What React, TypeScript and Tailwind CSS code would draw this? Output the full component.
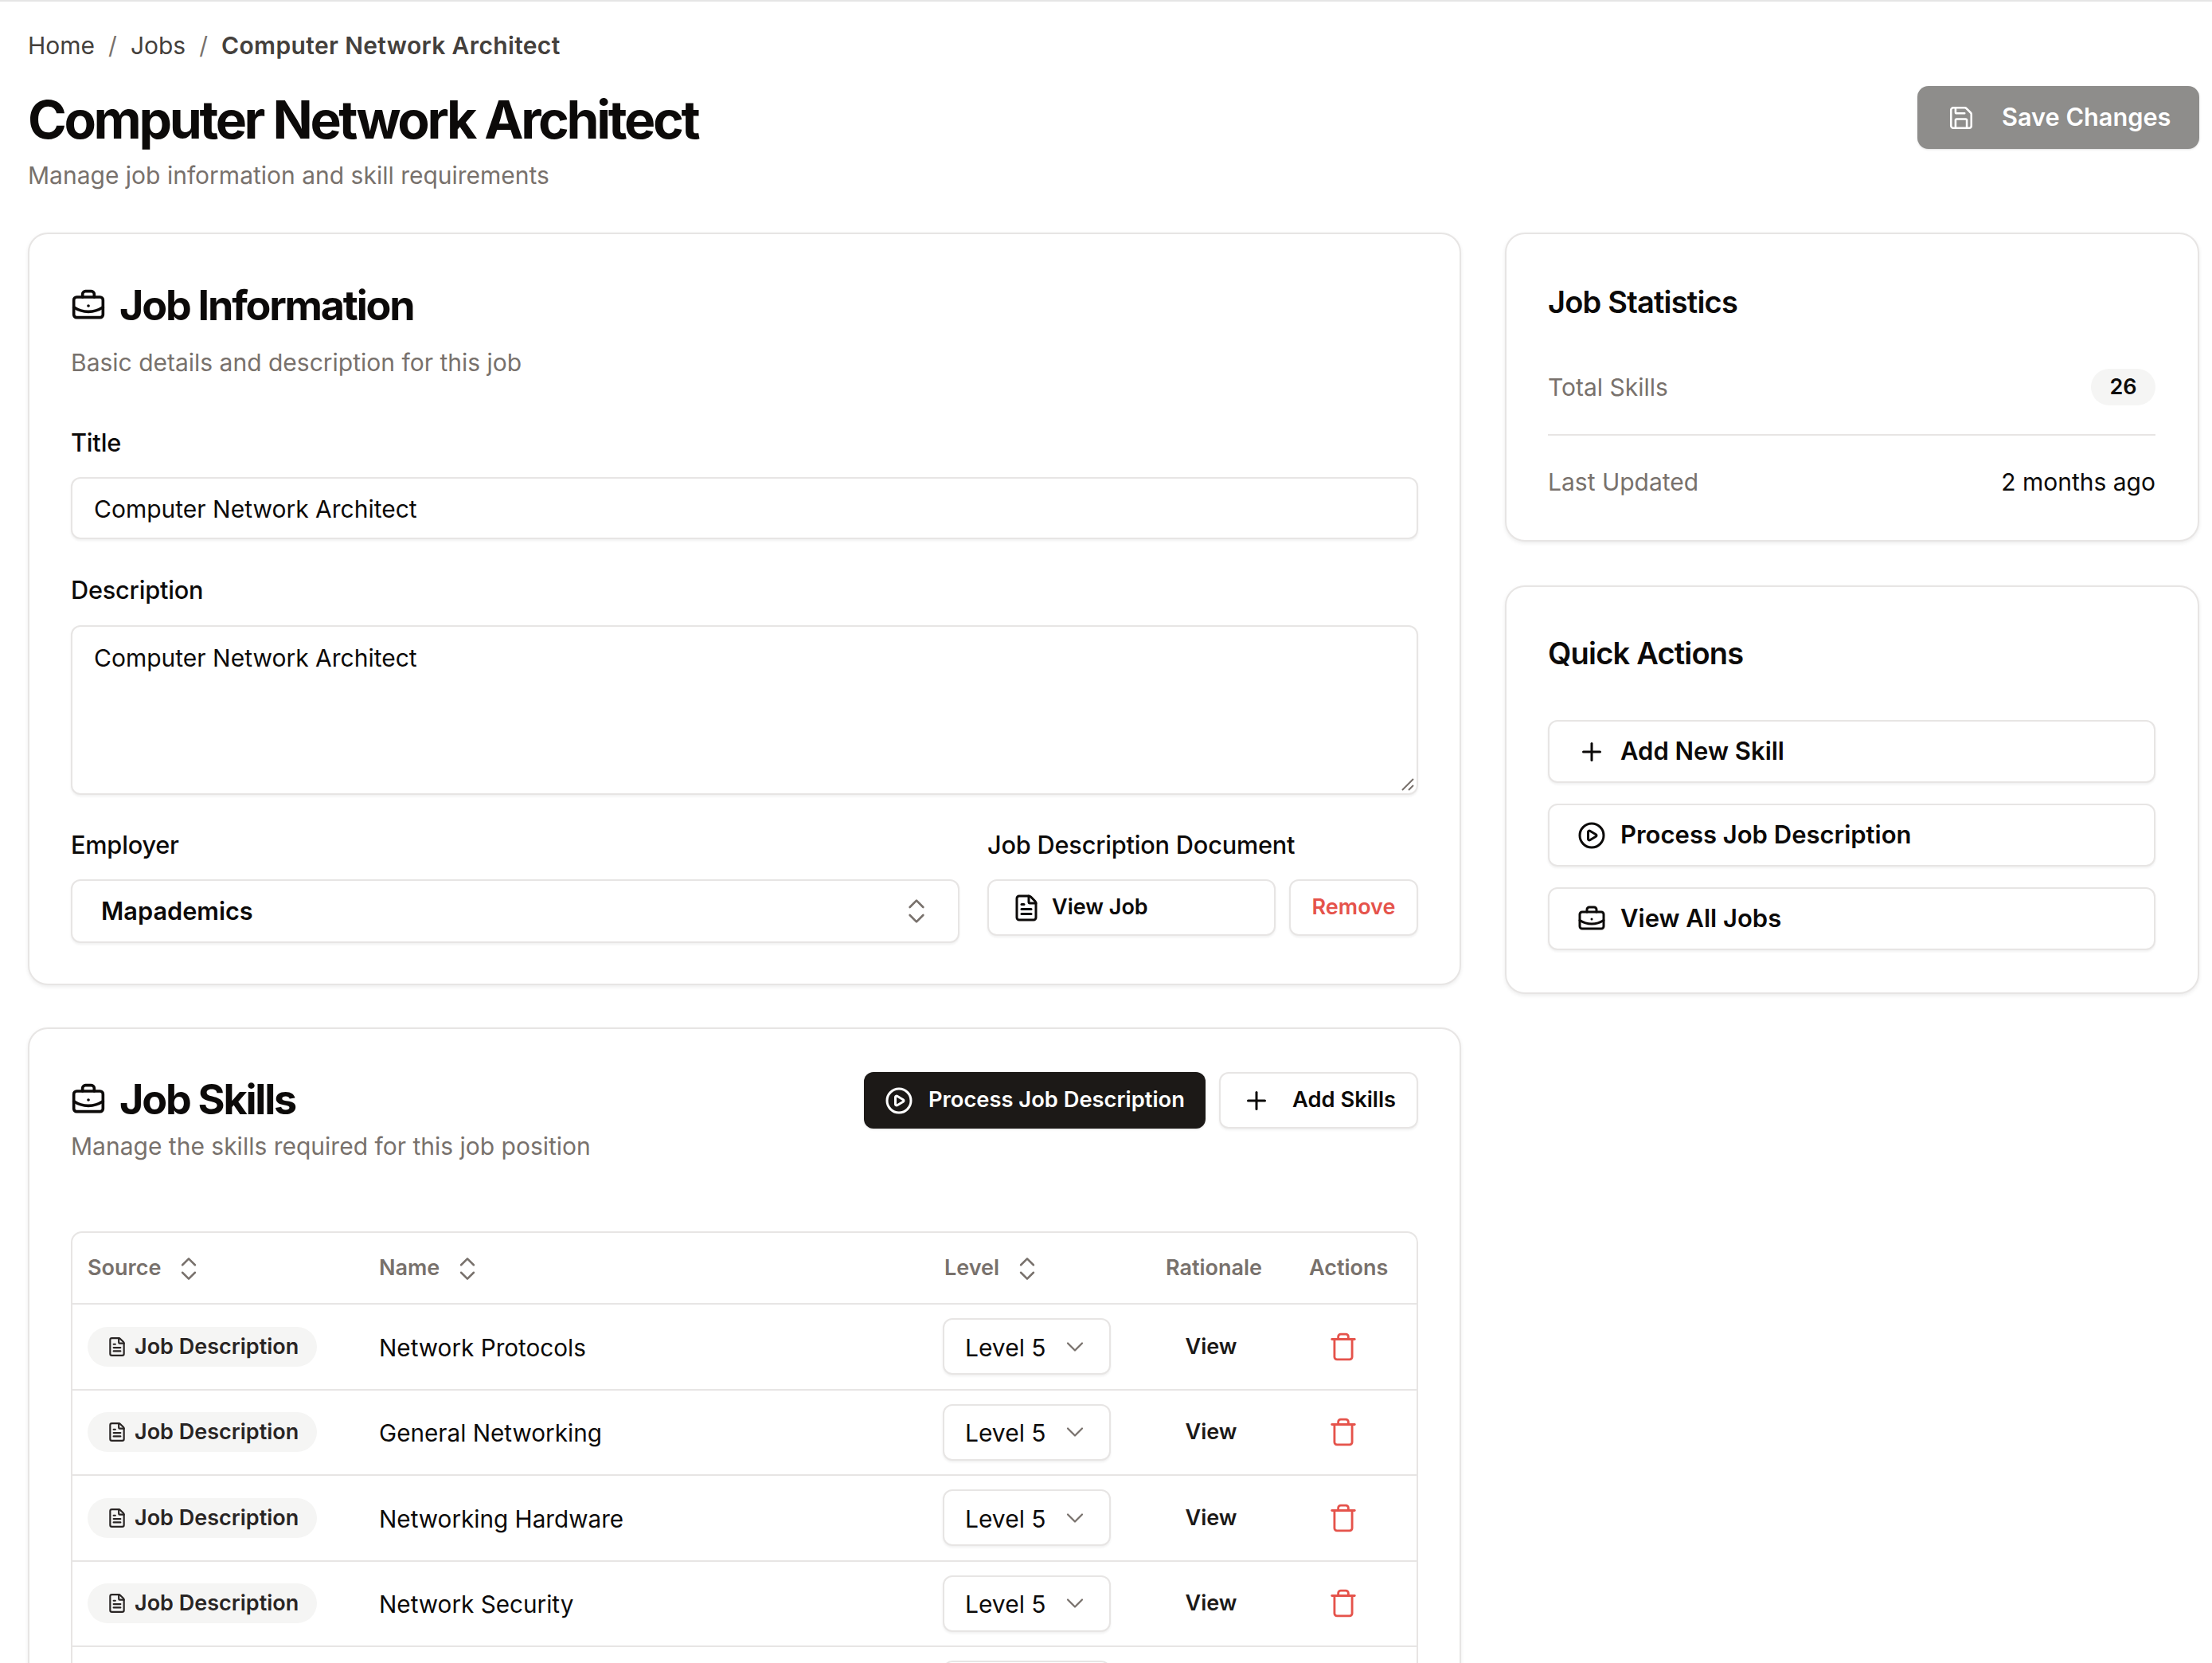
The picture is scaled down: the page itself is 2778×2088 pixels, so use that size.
import { BriefcaseBusiness, ChevronDown, ChevronsUpDown, CirclePlay, FileText, Plus, Save, Trash } from "lucide-react";

const card = "rounded-[25px] border-2 border-[#e7e5e4] bg-white shadow-[0_2px_5px_rgba(0,0,0,0.08)]";
const outline = "rounded-[12px] border-2 border-[#e7e5e4] bg-white shadow-[0_2px_3px_rgba(0,0,0,0.06)]";

function Label({ children }: { children: string }) {
  return <div className="h-[46px] text-[30.7px] leading-[46px] font-medium text-[#0c0a09] tracking-[-0.2px]">{children}</div>;
}

function QuickAction({ icon, label }: { icon: React.ReactNode; label: string }) {
  return (
    <div className={`${outline} flex h-[79px] items-center gap-[19px] pl-[36px] text-[31px] font-semibold text-[#0c0a09]`}>
      <span className="flex w-[34px] justify-center">{icon}</span>
      {label}
    </div>
  );
}

const row = "grid grid-cols-[366px_710px_278px_181px_1fr]";

function SortHead({ label }: { label: string }) {
  return (
    <div className="flex items-center gap-[16px] pl-[19px] text-[27px] font-semibold text-[#78716c]">
      {label}
      <ChevronsUpDown className="h-[38px] w-[38px] text-[#78716c]" strokeWidth={1.6} />
    </div>
  );
}

function LevelBox({ text }: { text: boolean }) {
  return (
    <div className={`${outline} flex h-[71px] w-[211px] items-center justify-between pl-[26px] pr-[25px] text-[30px] text-[#0c0a09]`}>
      {text && <span className="pt-[3px]">Level 5</span>}
      {text && <ChevronDown className="h-[36px] w-[36px] text-[#78716c]" strokeWidth={1.5} />}
    </div>
  );
}

function SkillRow({ name }: { name: string }) {
  return (
    <div className={`${row} h-[107.5px] items-center border-t-2 border-[#e7e5e4]`}>
      <div className="pl-[19px]">
        <div className="flex h-[50px] w-[288px] items-center gap-[9px] rounded-full bg-[#f5f5f4] pl-[24px] text-[27px] font-semibold text-[#292524]">
          <FileText className="h-[26px] w-[26px]" strokeWidth={2} />
          Job Description
        </div>
      </div>
      <div className="pl-[19px] pt-[3px] text-[29.7px] text-[#0c0a09]">{name}</div>
      <div className="pl-[17px]">
        <LevelBox text />
      </div>
      <div className="pl-[19px] pr-[48px] text-center text-[27px] font-semibold text-[#1c1917]">View</div>
      <div className="flex justify-center pr-[32px]">
        <Trash className="h-[38px] w-[38px] text-[#e5534b]" strokeWidth={1.8} />
      </div>
    </div>
  );
}

export default function App() {
  return (
    <div className="h-[2088px] overflow-hidden border-t-2 border-[#e5e5e5] bg-white pl-[35px] pr-[16px] font-['Inter',sans-serif]">
      <div className="mt-[32px] flex h-[46px] items-center gap-[17px] text-[30px] text-[#44403c]">
        <span>Home</span>
        <span className="text-[#78716c]">/</span>
        <span>Jobs</span>
        <span className="text-[#78716c]">/</span>
        <span className="font-semibold tracking-[0.35px]">Computer Network Architect</span>
      </div>
      <div className="flex items-start justify-between">
        <div>
          <h1 className="mt-[28px] text-[66px] leading-[84px] font-bold tracking-[-3.35px] text-[#0c0a09]">Computer Network Architect</h1>
          <p className="mt-[5px] text-[30px] leading-[46px] text-[#78716c]">Manage job information and skill requirements</p>
        </div>
        <div className="mt-[28px] flex h-[79px] w-[354px] items-center gap-[34px] rounded-[14px] bg-[#8e8d8b] pl-[38px] text-[30.7px] font-semibold text-white shadow-sm">
          <Save className="h-[34px] w-[34px]" strokeWidth={1.8} />
          Save Changes
        </div>
      </div>

      <div className="mt-[49px] flex items-start gap-[55px]">
        <div className="flex w-[1800px] flex-col gap-[53px]">
          <section className={`${card} h-[945px] px-[52px] pt-[58px]`}>
            <div className="flex items-center gap-[17px]">
              <BriefcaseBusiness className="h-[44px] w-[44px] text-[#0c0a09]" strokeWidth={2} />
              <h2 className="text-[52px] leading-[64px] font-bold tracking-[-2.2px] text-[#0c0a09]">Job Information</h2>
            </div>
            <p className="mt-[14px] text-[30px] leading-[50px] text-[#78716c]">Basic details and description for this job</p>
            <div className="mt-[53px]"><Label>Title</Label></div>
            <div className={`${outline} mt-[20px] flex h-[78px] items-center pl-[27px] pt-[2px] text-[30px] text-[#0c0a09]`}>Computer Network Architect</div>
            <div className="mt-[41px]"><Label>Description</Label></div>
            <div className={`${outline} relative mt-[21px] h-[213px] pl-[27px] pt-[17px] text-[30px] text-[#0c0a09]`}>
              Computer Network Architect
              <svg className="absolute bottom-[2px] right-[2px] h-[18px] w-[18px] text-[#78716c]" viewBox="0 0 18 18" fill="none" stroke="currentColor" strokeWidth="2">
                <path d="M16 2 2 16M16 10l-6 6" />
              </svg>
            </div>
            <div className="mt-[40px] flex gap-[35px]">
              <div className="w-[1116px]">
                <Label>Employer</Label>
                <div className={`${outline} mt-[20px] flex h-[80px] items-center justify-between pl-[36px] pr-[32px] text-[30.7px] font-semibold text-[#0c0a09]`}>
                  Mapademics
                  <ChevronsUpDown className="h-[40px] w-[40px] text-[#78716c]" strokeWidth={1.6} />
                </div>
              </div>
              <div className="flex-1">
                <Label>Job Description Document</Label>
                <div className="mt-[20px] flex gap-[17px]">
                  <div className={`${outline} flex h-[71px] w-[362px] items-center gap-[14px] pl-[29px] text-[27px] font-semibold text-[#0c0a09]`}>
                    <FileText className="h-[36px] w-[36px]" strokeWidth={2} />
                    View Job
                  </div>
                  <div className={`${outline} flex h-[71px] w-[162px] items-center justify-center text-[27px] font-semibold text-[#e5534b]`}>Remove</div>
                </div>
              </div>
            </div>
          </section>

          <section className={`${card} h-[900px] px-[52px] pt-[54px]`}>
            <div className="flex items-start justify-between">
              <div>
                <div className="flex items-center gap-[17px]">
                  <BriefcaseBusiness className="h-[44px] w-[44px] text-[#0c0a09]" strokeWidth={2} />
                  <h2 className="text-[52px] leading-[70px] font-bold tracking-[-2.2px] text-[#0c0a09]">Job Skills</h2>
                </div>
                <p className="text-[30px] leading-[46px] text-[#78716c]">Manage the skills required for this job position</p>
              </div>
              <div className="flex gap-[17px]">
                <div className="flex h-[71px] w-[429px] items-center gap-[19px] rounded-[12px] bg-[#1c1917] pl-[26px] text-[27.3px] font-semibold text-white shadow-sm">
                  <CirclePlay className="h-[36px] w-[36px]" strokeWidth={2} />
                  Process Job Description
                </div>
                <div className={`${outline} flex h-[71px] w-[250px] items-center gap-[27px] pl-[27px] text-[27.3px] font-semibold text-[#0c0a09]`}>
                  <Plus className="h-[36px] w-[36px]" strokeWidth={2} />
                  Add Skills
                </div>
              </div>
            </div>
            <div className="mt-[84px] rounded-t-[14px] border-2 border-[#e7e5e4]">
              <div className={`${row} h-[88px] items-center pt-[1px]`}>
                <SortHead label="Source" />
                <SortHead label="Name" />
                <SortHead label="Level" />
                <div className="pl-[19px] text-[27px] font-semibold text-[#78716c]">Rationale</div>
                <div className="pl-[18px] text-[27px] font-semibold text-[#78716c]">Actions</div>
              </div>
              <SkillRow name="Network Protocols" />
              <SkillRow name="General Networking" />
              <SkillRow name="Networking Hardware" />
              <SkillRow name="Network Security" />
              <div className={`${row} h-[107.5px] items-center border-t-2 border-[#e7e5e4]`}>
                <div />
                <div />
                <div className="pl-[17px]"><LevelBox text={false} /></div>
              </div>
            </div>
          </section>
        </div>

        <div className="flex w-[872px] flex-col gap-[55px]">
          <section className={`${card} h-[388px] pl-[52px] pr-[53px] pt-[57px]`}>
            <h3 className="text-[38px] leading-[56px] font-semibold tracking-[-0.8px] text-[#0c0a09]">Job Statistics</h3>
            <div className="mt-[28px] flex h-[112px] items-center justify-between border-b-2 border-[#e7e5e4] pb-[8px] text-[30px] text-[#78716c]">
              Total Skills
              <span className="flex h-[46px] w-[81px] items-center justify-center rounded-full bg-[#f5f5f4] text-[27px] font-semibold text-[#0c0a09]">26</span>
            </div>
            <div className="mt-[35px] flex items-center justify-between text-[30px] leading-[46px] text-[#78716c]">
              Last Updated
              <span className="text-[#0c0a09]">2 months ago</span>
            </div>
          </section>
          <section className={`${card} h-[513px] pl-[52px] pr-[53px] pt-[55px]`}>
            <h3 className="text-[38px] leading-[56px] font-semibold tracking-[-0.8px] text-[#0c0a09]">Quick Actions</h3>
            <div className="mt-[56px] flex flex-col gap-[26px]">
              <QuickAction icon={<Plus className="h-[36px] w-[36px] shrink-0" strokeWidth={2} />} label="Add New Skill" />
              <QuickAction icon={<CirclePlay className="h-[36px] w-[36px] shrink-0" strokeWidth={2} />} label="Process Job Description" />
              <QuickAction icon={<BriefcaseBusiness className="h-[36px] w-[36px] shrink-0" strokeWidth={2} />} label="View All Jobs" />
            </div>
          </section>
        </div>
      </div>
    </div>
  );
}
